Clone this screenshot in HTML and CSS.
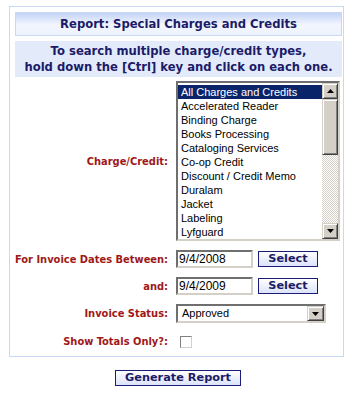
FILE: index.html
```html
<!DOCTYPE html>
<html lang="en">
  <head>
    <meta charset="UTF-8" />
    <title>Report: Special Charges and Credits</title>
    <link rel="stylesheet" href="styles.css">
  </head>
  <body>
    <div class="panel">
      <div class="title">Report: Special Charges and Credits</div>
      <div class="info">
        To search multiple charge/credit types,<br />
        hold down the [Ctrl] key and click on each one.
      </div>
      <div class="form">
        <div class="label">Charge/Credit:</div>
        <div class="listbox">
          <div class="options">
            <div class="opt sel">All Charges and Credits</div>
            <div class="opt">Accelerated Reader</div>
            <div class="opt">Binding Charge</div>
            <div class="opt">Books Processing</div>
            <div class="opt">Cataloging Services</div>
            <div class="opt">Co-op Credit</div>
            <div class="opt">Discount / Credit Memo</div>
            <div class="opt">Duralam</div>
            <div class="opt">Jacket</div>
            <div class="opt">Labeling</div>
            <div class="opt">Lyfguard</div>
          </div>
          <div class="scroll">
            <div class="sbtn">
              <svg width="7" height="4" viewBox="0 0 7 4"><polygon points="3.5,0 7,4 0,4" fill="#000"/></svg>
            </div>
            <div class="thumb"></div>
            <div class="track"></div>
            <div class="sbtn">
              <svg width="7" height="4" viewBox="0 0 7 4"><polygon points="0,0 7,0 3.5,4" fill="#000"/></svg>
            </div>
          </div>
        </div>

        <div class="label">For Invoice Dates Between:</div>
        <div class="field">
          <div class="input">9/4/2008</div>
          <div class="btn">Select</div>
        </div>

        <div class="label">and:</div>
        <div class="field">
          <div class="input">9/4/2009</div>
          <div class="btn">Select</div>
        </div>

        <div class="label">Invoice Status:</div>
        <div class="field">
          <div class="dropdown">
            <div class="value">Approved</div>
            <div class="sbtn">
              <svg width="7" height="4" viewBox="0 0 7 4"><polygon points="0,0 7,0 3.5,4" fill="#000"/></svg>
            </div>
          </div>
        </div>

        <div class="label">Show Totals Only?:</div>
        <div class="field">
          <div class="check"></div>
        </div>
      </div>
    </div>
    <div class="actions">
      <div class="btn big">Generate Report</div>
    </div>
  </body>
</html>
```

FILE: styles.css
```css
body {
  margin: 0;
  font-family: "DejaVu Sans", Verdana, sans-serif;
  background: #fff;
}
.panel {
  margin: 6px 0 0 9px;
  width: 335px;
  box-sizing: border-box;
  border: 1px solid #c9d9f4;
  padding: 5px 1px 6px 5px;
}
.title {
  height: 24px;
  box-sizing: border-box;
  border: 1px solid #c9d8f5;
  background: linear-gradient(#c4d4f6, #f3f6fe 55%, #edf2fd);
  color: #1b1b68;
  font-weight: bold;
  font-size: 11.6px;
  line-height: 22px;
  text-align: center;
}
.info {
  margin-top: 5px;
  height: 36px;
  box-sizing: border-box;
  background: #e3ebfb;
  padding-top: 2px;
  color: #1b1b68;
  font-weight: bold;
  font-size: 11.6px;
  line-height: 16px;
  text-align: center;
}
.form {
  margin-top: 4px;
  display: grid;
  grid-template-columns: 153px auto;
  column-gap: 8px;
  row-gap: 9px;
}
.label {
  align-self: center;
  text-align: right;
  white-space: nowrap;
  font-family: "DejaVu Sans Condensed", "DejaVu Sans", sans-serif;
  font-weight: bold;
  font-size: 11px;
  color: #a01818;
}
.field {
  display: flex;
  align-items: center;
  min-height: 18px;
}

/* list box */
.listbox {
  display: flex;
  width: 164px;
  height: 160px;
  box-sizing: border-box;
  border-style: solid;
  border-width: 2px;
  border-color: #6f6f6f #d4d0c8 #d4d0c8 #6f6f6f;
  font-family: "Liberation Sans", Arial, sans-serif;
  font-size: 11px;
}
.options {
  flex: 1;
  padding-top: 2px;
}
.opt {
  height: 14px;
  line-height: 14px;
  padding-left: 3px;
  color: #000;
  white-space: nowrap;
}
.opt.sel {
  background: #0a246a;
  color: #fff;
}
.scroll {
  width: 16px;
  display: flex;
  flex-direction: column;
}
.sbtn {
  width: 16px;
  height: 16px;
  box-sizing: border-box;
  background: #d4d0c8;
  border-style: solid;
  border-width: 1px;
  border-color: #d4d0c8 #404040 #404040 #d4d0c8;
  box-shadow: inset 1px 1px #fff, inset -1px -1px #808080;
  display: flex;
  align-items: center;
  justify-content: center;
}
.thumb {
  height: 56px;
  box-sizing: border-box;
  background: #d4d0c8;
  border-style: solid;
  border-width: 1px;
  border-color: #d4d0c8 #404040 #404040 #d4d0c8;
  box-shadow: inset 1px 1px #fff, inset -1px -1px #808080;
}
.track {
  flex: 1;
  background-image: conic-gradient(#d4d0c8 25%, #fff 0 50%, #d4d0c8 0 75%, #fff 0);
  background-size: 2px 2px;
}

/* inputs */
.input {
  width: 77px;
  height: 18px;
  box-sizing: border-box;
  border-style: solid;
  border-width: 2px;
  border-color: #6f6f6f #d4d0c8 #d4d0c8 #6f6f6f;
  font-family: "Liberation Sans", Arial, sans-serif;
  font-size: 12px;
  line-height: 14px;
  padding-left: 1px;
}
.btn {
  margin-left: 5px;
  width: 60px;
  height: 16px;
  box-sizing: border-box;
  border: 1px solid #1b1b78;
  background: linear-gradient(#ffffff, #dce3fa);
  color: #1b1b68;
  font-weight: bold;
  font-size: 11.3px;
  line-height: 14px;
  text-align: center;
}
.dropdown {
  width: 150px;
  height: 19px;
  box-sizing: border-box;
  border-style: solid;
  border-width: 2px;
  border-color: #6f6f6f #d4d0c8 #d4d0c8 #6f6f6f;
  display: flex;
  font-family: "Liberation Sans", Arial, sans-serif;
  font-size: 11px;
}
.dropdown .value {
  flex: 1;
  line-height: 15px;
  padding-left: 4px;
}
.dropdown .sbtn {
  height: 15px;
  width: 17px;
}
.check {
  margin-left: 4px;
  margin-top: 2px;
  width: 12px;
  height: 12px;
  box-sizing: border-box;
  border-style: solid;
  border-width: 1px;
  border-color: #808080 #d4d0c8 #d4d0c8 #808080;
}

.actions {
  margin-top: 13px;
  display: flex;
  justify-content: center;
  padding-left: 2px;
}
.btn.big {
  margin-left: 0;
  width: 126px;
}
```
